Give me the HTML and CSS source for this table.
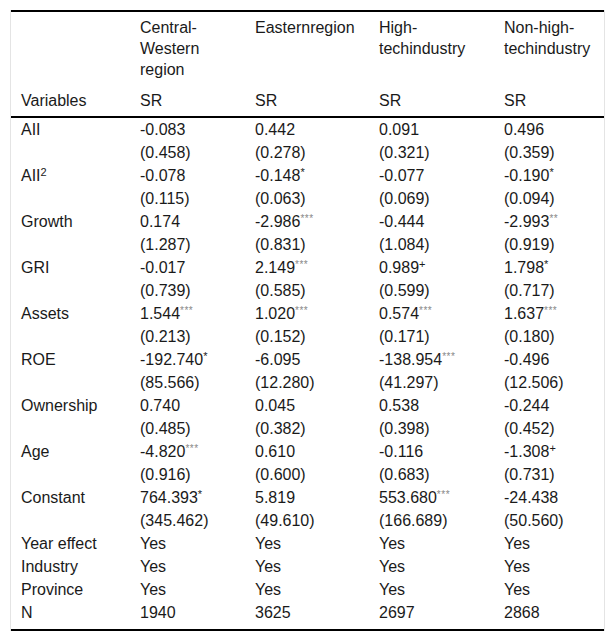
FILE: index.html
```html
<!DOCTYPE html>
<html>
<head>
<meta charset="utf-8">
<link rel="stylesheet" href="styles.css">
</head>
<body>
<div class="wrap">
<table class="tbl">
<colgroup>
<col class="c1"><col class="c2"><col class="c3"><col class="c4"><col class="c5">
</colgroup>
<thead>
<tr class="h1"><th></th><th>Central-<br>Western<br>region</th><th>Easternregion</th><th>High-<br>techindustry</th><th>Non-high-<br>techindustry</th></tr>
<tr class="h2"><th>Variables</th><th>SR</th><th>SR</th><th>SR</th><th>SR</th></tr>
</thead>
<tbody>
<tr><td>AII</td><td>-0.083</td><td>0.442</td><td>0.091</td><td>0.496</td></tr>
<tr><td></td><td>(0.458)</td><td>(0.278)</td><td>(0.321)</td><td>(0.359)</td></tr>
<tr><td>AII<sup>2</sup></td><td>-0.078</td><td>-0.148<sup>*</sup></td><td>-0.077</td><td>-0.190<sup>*</sup></td></tr>
<tr><td></td><td>(0.115)</td><td>(0.063)</td><td>(0.069)</td><td>(0.094)</td></tr>
<tr><td>Growth</td><td>0.174</td><td>-2.986<sup class="s3">***</sup></td><td>-0.444</td><td>-2.993<sup class="s3">**</sup></td></tr>
<tr><td></td><td>(1.287)</td><td>(0.831)</td><td>(1.084)</td><td>(0.919)</td></tr>
<tr><td>GRI</td><td>-0.017</td><td>2.149<sup class="s3">***</sup></td><td>0.989<sup>+</sup></td><td>1.798<sup>*</sup></td></tr>
<tr><td></td><td>(0.739)</td><td>(0.585)</td><td>(0.599)</td><td>(0.717)</td></tr>
<tr><td>Assets</td><td>1.544<sup class="s3">***</sup></td><td>1.020<sup class="s3">***</sup></td><td>0.574<sup class="s3">***</sup></td><td>1.637<sup class="s3">***</sup></td></tr>
<tr><td></td><td>(0.213)</td><td>(0.152)</td><td>(0.171)</td><td>(0.180)</td></tr>
<tr><td>ROE</td><td>-192.740<sup>*</sup></td><td>-6.095</td><td>-138.954<sup class="s3">***</sup></td><td>-0.496</td></tr>
<tr><td></td><td>(85.566)</td><td>(12.280)</td><td>(41.297)</td><td>(12.506)</td></tr>
<tr><td>Ownership</td><td>0.740</td><td>0.045</td><td>0.538</td><td>-0.244</td></tr>
<tr><td></td><td>(0.485)</td><td>(0.382)</td><td>(0.398)</td><td>(0.452)</td></tr>
<tr><td>Age</td><td>-4.820<sup class="s3">***</sup></td><td>0.610</td><td>-0.116</td><td>-1.308<sup>+</sup></td></tr>
<tr><td></td><td>(0.916)</td><td>(0.600)</td><td>(0.683)</td><td>(0.731)</td></tr>
<tr><td>Constant</td><td>764.393<sup>*</sup></td><td>5.819</td><td>553.680<sup class="s3">***</sup></td><td>-24.438</td></tr>
<tr><td></td><td>(345.462)</td><td>(49.610)</td><td>(166.689)</td><td>(50.560)</td></tr>
<tr><td>Year effect</td><td>Yes</td><td>Yes</td><td>Yes</td><td>Yes</td></tr>
<tr><td>Industry</td><td>Yes</td><td>Yes</td><td>Yes</td><td>Yes</td></tr>
<tr><td>Province</td><td>Yes</td><td>Yes</td><td>Yes</td><td>Yes</td></tr>
<tr class="last"><td>N</td><td>1940</td><td>3625</td><td>2697</td><td>2868</td></tr>
</tbody>
</table>
</div>
</body>
</html>
```
FILE: styles.css
```css
html, body {
  margin: 0;
  padding: 0;
  background: #fff;
}
body {
  font-family: "Liberation Sans", Arial, sans-serif;
  font-size: 16px;
  color: #1a1a1a;
}
.wrap {
  margin: 10px 0 0 10px;
  width: 595px;
  box-sizing: border-box;
  border-left: 1px solid #e4e4e4;
  border-right: 1px solid #e4e4e4;
}
.tbl {
  width: 593px;
  border-collapse: collapse;
  table-layout: fixed;
  border-top: 2px solid #000;
  border-bottom: 2px solid #000;
  line-height: 21px;
}
.c1 { width: 119px; }
.c2 { width: 115px; }
.c3 { width: 124px; }
.c4 { width: 125px; }
.c5 { width: 110px; }
th, td {
  text-align: left;
  font-weight: normal;
  vertical-align: top;
  padding: 1px 0 1px 10px;
  white-space: nowrap;
}
thead th {
  padding-top: 5px;
  padding-bottom: 5px;
}
thead tr.h2 th {
  border-bottom: 2px solid #000;
}
tr.last td {
  padding-bottom: 6px;
}
sup {
  font-size: 11px;
  line-height: 0;
  vertical-align: 5px;
}
sup.s3 {
  color: #888;
  font-size: 10px;
  letter-spacing: 0.5px;
}
```
